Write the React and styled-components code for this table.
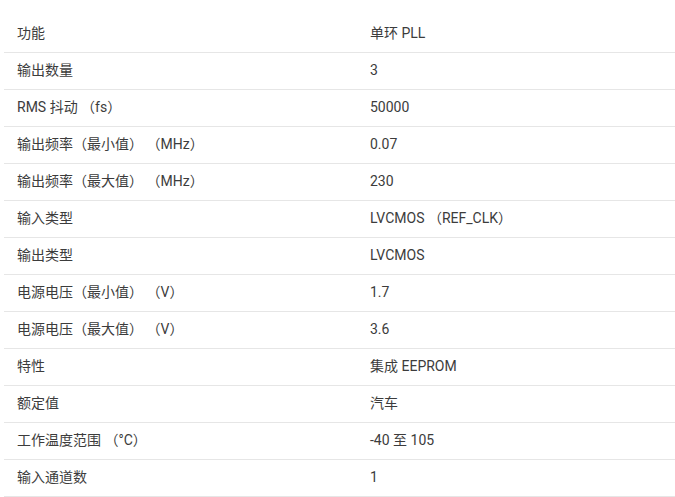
import React from 'react'
import styled, { createGlobalStyle } from 'styled-components'

const Global = createGlobalStyle`
  html, body {
    margin: 0;
    padding: 0;
    background: #fff;
    overflow: hidden;
  }
  body {
    font-family: Roboto, "Noto Sans CJK SC", sans-serif;
  }
`

const Wrap = styled.div`
  padding: 16px 0 0 4px;
`

const Table = styled.div`
  display: flex;
  flex-direction: column;
`

const Row = styled.div`
  display: grid;
  grid-template-columns: 353px 1fr;
  height: 36px;
  align-items: center;
  border-bottom: 1px solid #e6e6e6;
`

const Cell = styled.div`
  padding: 0 0 2px 13px;
  font-size: 14px;
  line-height: 18px;
  color: #3c3c3c;
  white-space: nowrap;
`

const rows = [
  ['功能', '单环 PLL'],
  ['输出数量', '3'],
  ['RMS 抖动 （fs）', '50000'],
  ['输出频率（最小值） （MHz）', '0.07'],
  ['输出频率（最大值） （MHz）', '230'],
  ['输入类型', 'LVCMOS （REF_CLK）'],
  ['输出类型', 'LVCMOS'],
  ['电源电压（最小值） （V）', '1.7'],
  ['电源电压（最大值） （V）', '3.6'],
  ['特性', '集成 EEPROM'],
  ['额定值', '汽车'],
  ['工作温度范围 （°C）', '-40 至 105'],
  ['输入通道数', '1'],
]

export default function App() {
  return (
    <Wrap>
      <Global />
      <Table>
        {rows.map(([k, v]) => (
          <Row key={k}>
            <Cell>{k}</Cell>
            <Cell>{v}</Cell>
          </Row>
        ))}
      </Table>
    </Wrap>
  )
}
